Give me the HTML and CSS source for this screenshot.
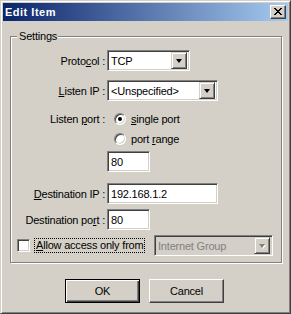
FILE: index.html
```html
<!DOCTYPE html>
<html>
<head>
<meta charset="utf-8">
<link rel="stylesheet" href="styles.css">
</head>
<body>
<div class="window">
  <div class="titlebar">
    <span class="title">Edit Item</span>
    <span class="close">
      <svg width="8" height="7" viewBox="0 0 8 7" shape-rendering="crispEdges">
        <path fill="#000" d="M0 0h2v1H0zM6 0h2v1H6zM1 1h2v1H1zM5 1h2v1H5zM2 2h4v1H2zM3 3h2v1H3zM2 4h4v1H2zM1 5h2v1H1zM5 5h2v1H5zM0 6h2v1H0zM6 6h2v1H6z"/>
      </svg>
    </span>
  </div>
  <div class="client">
    <fieldset class="group">
      <legend>Settings</legend>
      <div class="row r-protocol">
        <span class="lbl">Proto<u>c</u>ol :</span>
        <div class="combo w-proto"><span class="val">TCP</span><span class="drop"><i class="arrow"></i></span></div>
      </div>
      <div class="row r-listenip">
        <span class="lbl"><u>L</u>isten IP :</span>
        <div class="combo w-ip"><span class="val">&lt;Unspecified&gt;</span><span class="drop"><i class="arrow"></i></span></div>
      </div>
      <div class="row r-radio1">
        <span class="lbl">Listen <u>p</u>ort :</span>
        <span class="radio checked"></span><span class="rtext"><u>s</u>ingle port</span>
      </div>
      <div class="row r-radio2">
        <span class="lbl"></span>
        <span class="radio"></span><span class="rtext">port <u>r</u>ange</span>
      </div>
      <div class="row r-port">
        <span class="lbl"></span>
        <div class="edit w-port">80</div>
      </div>
      <div class="row r-destip">
        <span class="lbl"><u>D</u>estination IP :</span>
        <div class="edit w-ip">192.168.1.2</div>
      </div>
      <div class="row r-destport">
        <span class="lbl">Destination po<u>r</u>t :</span>
        <div class="edit w-port">80</div>
      </div>
      <div class="row r-check">
        <span class="checkbox"></span>
        <span class="ctext"><u>A</u>llow access only from</span>
        <div class="combo disabled w-group"><span class="val">Internet Group</span><span class="drop"><i class="arrow"></i></span></div>
      </div>
    </fieldset>
    <div class="buttons">
      <div class="btn default"><span>OK</span></div>
      <div class="btn"><span>Cancel</span></div>
    </div>
  </div>
</div>
</body>
</html>
```
FILE: styles.css
```css
* { box-sizing: border-box; }
html, body { margin: 0; padding: 0; background: #D4D0C8; }
body {
  font-family: "Liberation Sans", Arial, sans-serif;
  font-size: 11px;
  letter-spacing: -0.2px;
  color: #000;
  width: 291px;
  height: 314px;
  overflow: hidden;
}
u { text-decoration: underline; text-underline-offset: 1px; }

.window {
  width: 291px;
  height: 314px;
  background: #D4D0C8;
  border: 1px solid;
  border-color: #D4D0C8 #404040 #404040 #D4D0C8;
  box-shadow: inset 1px 1px 0 #fff, inset -1px -1px 0 #808080;
  padding: 2px;
  display: flex;
  flex-direction: column;
}

.titlebar {
  height: 18px;
  background: linear-gradient(to right, #0A246A, #A6CAF0);
  display: flex;
  align-items: center;
  justify-content: space-between;
  padding: 0 2px 0 2px;
}
.title {
  color: #fff;
  font-weight: bold;
  font-size: 11px;
  letter-spacing: 0.5px;
}
.close {
  width: 16px;
  height: 14px;
  background: #D4D0C8;
  border: 1px solid;
  border-color: #fff #404040 #404040 #fff;
  box-shadow: inset -1px -1px 0 #808080;
  display: flex;
  align-items: center;
  justify-content: center;
  padding: 0 1px 1px 0;
}
.close svg { display: block; }

.client {
  flex: 1;
  padding: 9px 6px 8px 7px;
  display: flex;
  flex-direction: column;
}

.group {
  margin: 0;
  width: 272px;
  height: 233px;
  border: 1px solid #808080;
  box-shadow: inset 1px 1px 0 #fff, 1px 1px 0 #fff;
  padding: 7px 0 0 0;
  min-width: 0;
}
.group legend {
  padding: 0 1px 0 2px;
  margin-left: 6px;
  line-height: 13px;
  background: #D4D0C8;
}

.row {
  display: flex;
  align-items: center;
}
.lbl {
  width: 94px;
  margin-right: 2px;
  text-align: right;
  white-space: nowrap;
  flex: none;
}
.r-listenip { margin-top: 9px; }
.r-radio1 { height: 20px; margin-top: 8px; }
.r-radio2 { height: 20px; }
.r-port { margin-top: 2px; }
.r-destip { margin-top: 11px; }
.r-destport { margin-top: 5px; }
.r-check { margin-top: 5px; padding-left: 6px; padding-right: 8px; }

.combo, .edit {
  height: 21px;
  background: #fff;
  border: 1px solid;
  border-color: #808080 #fff #fff #808080;
  box-shadow: inset 1px 1px 0 #404040, inset -1px -1px 0 #D4D0C8;
  display: flex;
  align-items: center;
  flex: none;
}
.edit { padding-left: 3px; }
.combo { padding: 2px 2px 2px 3px; }
.combo .val { flex: 1; white-space: nowrap; overflow: hidden; }
.w-proto { width: 83px; }
.w-ip { width: 111px; }
.w-port { width: 43px; }
.w-group { width: 119px; }

.drop {
  width: 16px;
  height: 17px;
  background: #D4D0C8;
  border: 1px solid;
  border-color: #D4D0C8 #404040 #404040 #D4D0C8;
  box-shadow: inset 1px 1px 0 #fff, inset -1px -1px 0 #808080;
  display: flex;
  align-items: center;
  justify-content: center;
  flex: none;
}
.arrow {
  display: block;
  width: 0;
  height: 0;
  border-left: 3.5px solid transparent;
  border-right: 3.5px solid transparent;
  border-top: 4px solid #000;
}

.combo.disabled { background: #D4D0C8; color: #808080; margin-left: auto; }
.combo.disabled .arrow { border-top-color: #808080; filter: drop-shadow(1px 1px 0 #fff); }

.radio {
  width: 12px;
  height: 12px;
  margin-left: 7px;
  border-radius: 50%;
  background: #fff;
  border: 1px solid;
  border-color: #808080 #fff #fff #808080;
  box-shadow: inset 1px 1px 0 #404040, inset -1px -1px 0 #D4D0C8;
  display: flex;
  align-items: center;
  justify-content: center;
  flex: none;
}
.radio.checked::after {
  content: "";
  width: 4px;
  height: 4px;
  border-radius: 50%;
  background: #000;
}
.rtext { margin-left: 5px; white-space: nowrap; }

.checkbox {
  width: 13px;
  height: 13px;
  background: #fff;
  border: 1px solid;
  border-color: #808080 #fff #fff #808080;
  box-shadow: inset 1px 1px 0 #404040, inset -1px -1px 0 #D4D0C8;
  flex: none;
}
.ctext {
  margin-left: 4px;
  padding: 0 1px;
  border: 1px dotted #000;
  line-height: 13px;
  white-space: nowrap;
}

.buttons {
  display: flex;
  justify-content: flex-start;
  gap: 9px;
  margin-top: auto;
  padding-left: 55px;
}
.btn {
  width: 75px;
  height: 24px;
  background: #D4D0C8;
  border: 1px solid;
  border-color: #fff #404040 #404040 #fff;
  box-shadow: inset -1px -1px 0 #808080;
  display: flex;
  align-items: center;
  justify-content: center;
}
.btn.default {
  border: 1px solid #000;
  box-shadow: inset 1px 1px 0 #fff, inset -1px -1px 0 #404040, inset -2px -2px 0 #808080;
}
```
